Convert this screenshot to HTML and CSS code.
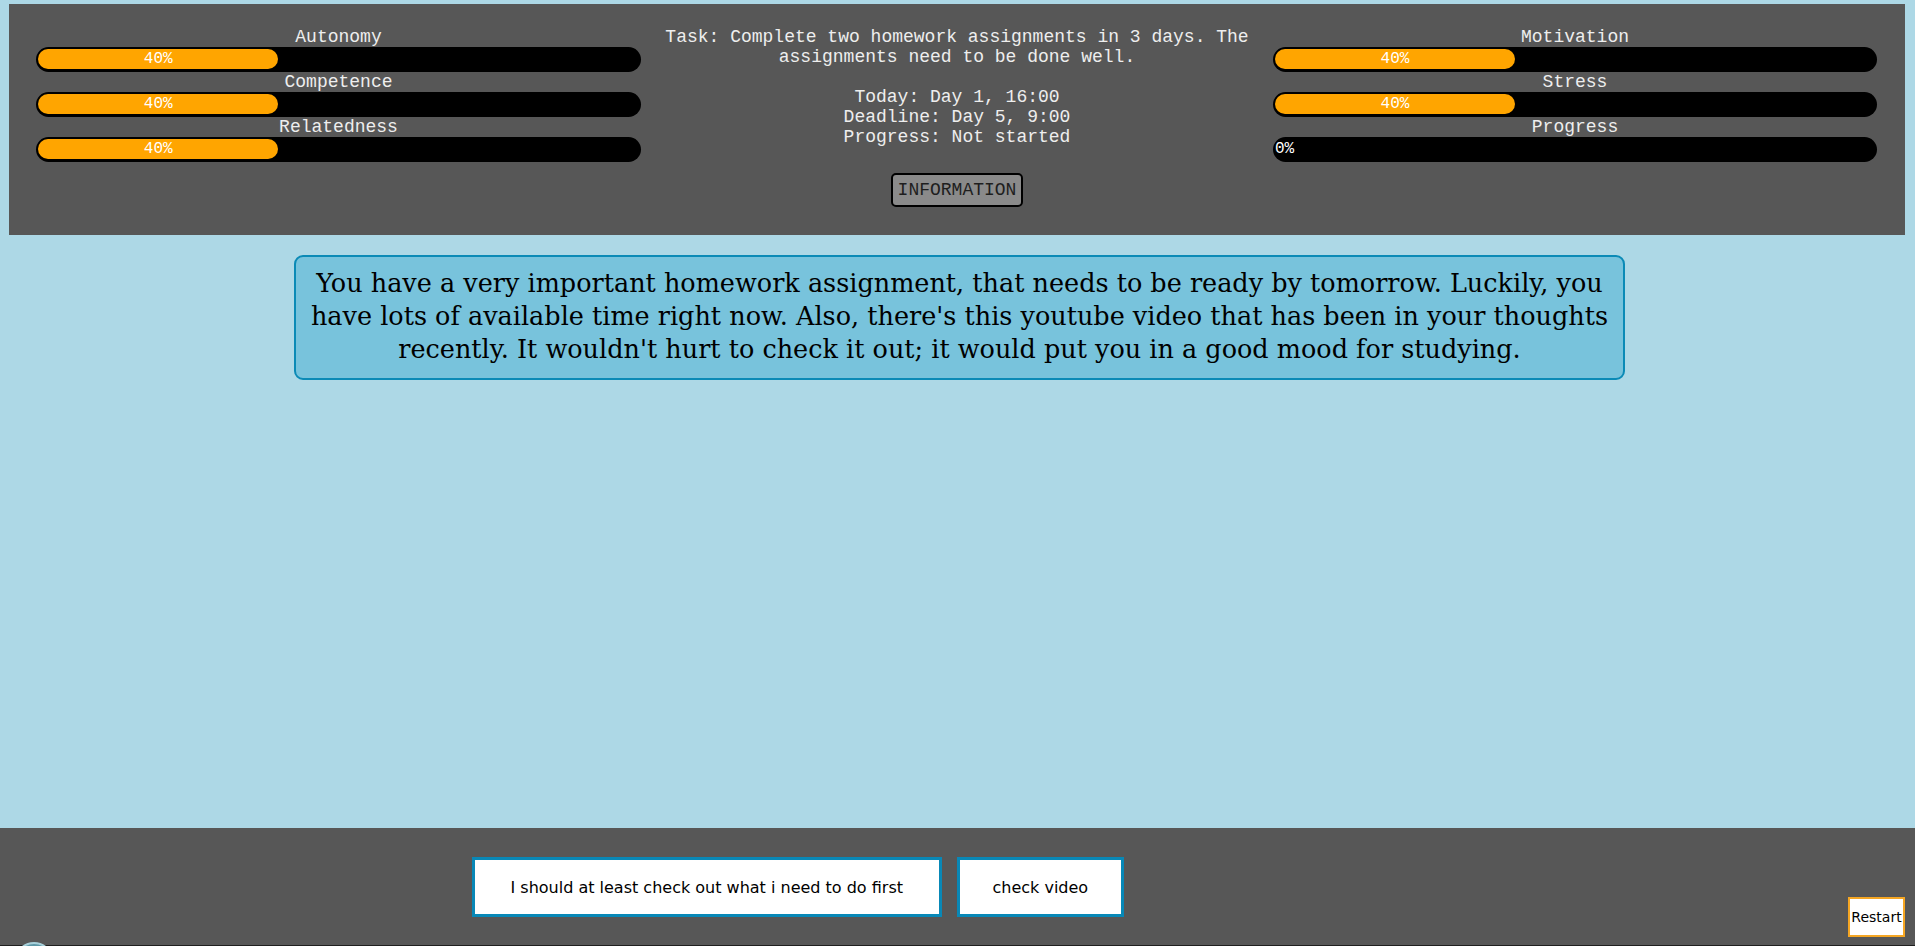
FILE: index.html
```html
<!DOCTYPE html>
<html lang="en">
<head>
<meta charset="utf-8">
<title>Homework</title>
<link rel="stylesheet" href="styles.css">
</head>
<body>
<header class="status">
  <div class="stats">
    <div class="stat">
      <div class="stat-label">Autonomy</div>
      <div class="bar"><div class="fill" style="width:40%">40%</div></div>
    </div>
    <div class="stat">
      <div class="stat-label">Competence</div>
      <div class="bar"><div class="fill" style="width:40%">40%</div></div>
    </div>
    <div class="stat">
      <div class="stat-label">Relatedness</div>
      <div class="bar"><div class="fill" style="width:40%">40%</div></div>
    </div>
  </div>
  <div class="task">
    <p class="task-text">Task: Complete two homework assignments in 3 days. The assignments need to be done well.<br><br>Today: Day 1, 16:00<br>Deadline: Day 5, 9:00<br>Progress: Not started</p>
    <button class="info-btn">INFORMATION</button>
  </div>
  <div class="stats">
    <div class="stat">
      <div class="stat-label">Motivation</div>
      <div class="bar"><div class="fill" style="width:40%">40%</div></div>
    </div>
    <div class="stat">
      <div class="stat-label">Stress</div>
      <div class="bar"><div class="fill" style="width:40%">40%</div></div>
    </div>
    <div class="stat">
      <div class="stat-label">Progress</div>
      <div class="bar"><div class="fill" style="width:0%">0%</div></div>
    </div>
  </div>
</header>

<main class="story">
  <div class="message">You have a very important homework assignment, that needs to be ready by tomorrow. Luckily, you have lots of available time right now. Also, there's this youtube video that has been in your thoughts recently. It wouldn't hurt to check it out; it would put you in a good mood for studying.</div>
</main>

<footer class="choices">
  <button class="choice">I should at least check out what i need to do first</button>
  <button class="choice choice-short">check video</button>
  <button class="restart">Restart</button>
  <span class="orb"></span>
</footer>
</body>
</html>
```

FILE: styles.css
```css
html, body {
  margin: 0;
  padding: 0;
}

body {
  background: #add8e6;
  height: 946px;
  overflow: hidden;
}

.status {
  margin: 4px 10px 0 9px;
  padding: 23px 28px 28px 27px;
  background: #575757;
  display: grid;
  grid-template-columns: 605px 1fr 604px;
  font-family: "Liberation Mono", "Courier New", monospace;
  font-size: 18px;
  line-height: 20px;
  color: #eeeeee;
}

.stats {
  display: flex;
  flex-direction: column;
}

.stat-label {
  text-align: center;
  height: 20px;
}

.bar {
  background: #000;
  border-radius: 13px;
  padding: 2px 2px 3px 2px;
  height: 20px;
}

.fill {
  height: 20px;
  background: #ffa500;
  border-radius: 10px;
  text-align: center;
  white-space: nowrap;
  font-size: 16px;
  line-height: 20px;
  color: #ffffff;
}

.task {
  display: flex;
  flex-direction: column;
  align-items: center;
  text-align: center;
}

.task-text {
  margin: 0;
}

.info-btn {
  margin-top: 26px;
  font-family: "Liberation Mono", "Courier New", monospace;
  font-size: 18px;
  line-height: 20px;
  padding: 5px 5px;
  background: #8a8a8a;
  color: #1e1e1e;
  border: 2px solid #000;
  border-radius: 5px;
}

.story {
  display: block;
}

.message {
  width: 1331px;
  box-sizing: border-box;
  margin: 20px 0 0 294px;
  padding: 10px 10px 12px;
  background: #78c3dc;
  border: 2px solid #0b8ab6;
  border-radius: 9px;
  font-family: "DejaVu Serif", Georgia, serif;
  font-size: 25.5px;
  line-height: 33px;
  color: #000;
  text-align: center;
}

.choices {
  position: fixed;
  left: 0;
  right: 0;
  bottom: 0;
  height: 118px;
  box-sizing: border-box;
  padding: 29px 0 0 472px;
  background: #575757;
  box-shadow: inset 0 -1px 0 #1f1f1f;
  display: flex;
  align-items: flex-start;
  gap: 15px;
  overflow: hidden;
}

.choice {
  height: 60px;
  padding: 0 35.5px;
  background: #ffffff;
  border: 3px solid #0888b7;
  font-family: "DejaVu Sans", Tahoma, sans-serif;
  font-size: 16px;
  color: #000;
}

.choice-short {
  padding: 0 33px;
}

.restart {
  position: absolute;
  right: 10px;
  bottom: 9px;
  width: 57px;
  height: 40px;
  padding: 0;
  background: #ffffff;
  border: 2px solid #f5a623;
  font-family: "DejaVu Sans", Tahoma, sans-serif;
  font-size: 14px;
  color: #000;
}

.orb {
  position: absolute;
  left: 14px;
  top: 114px;
  width: 36px;
  height: 36px;
  border-radius: 50%;
  background: #5d97a6;
  border: 2px solid #a7d0da;
}
```
